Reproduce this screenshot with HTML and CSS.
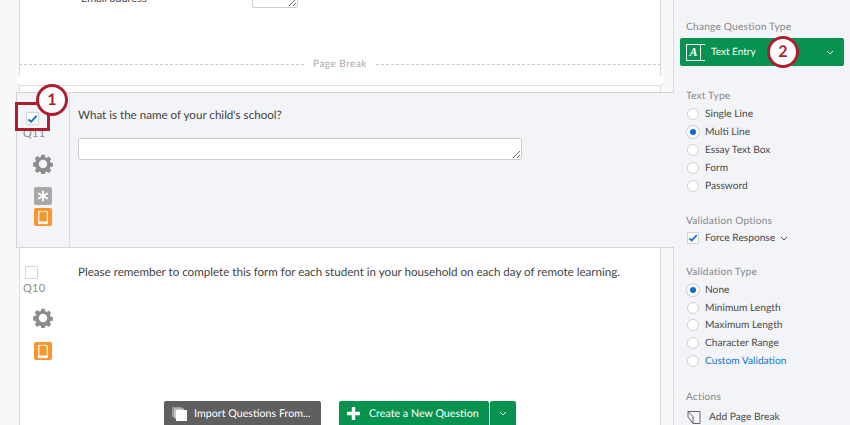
FILE: index.html
```html
<!DOCTYPE html>
<html lang="en">
<head>
    <meta charset="UTF-8">
    <title>Change Question Type</title>
    <link rel="stylesheet" href="styles.css">
</head>
<body>

<div class="page">
    <div class="canvas">
        <div class="block-top">
            <div class="email-row">
                <span class="email-label">Email address</span>
                <textarea class="small-box"></textarea>
            </div>
            <div class="page-break">
                <span class="break-line"></span>
                <span class="break-text">Page Break</span>
                <span class="break-line"></span>
            </div>
            <div class="tear"></div>
        </div>

        <div class="question selected">
            <div class="q-side">
                <span class="check checked">
                    <svg width="12" height="10" viewBox="0 0 12 10"><path d="M1.500 5.500 L4.500 8 L10.500 1.500" fill="none" stroke="#0b6ed0" stroke-width="2"/></svg>
                </span>
                <span class="q-id">Q11</span>
                <svg class="gear" width="20" height="20" viewBox="0 0 20 20"><use href="#gear-icon"/></svg>
                <span class="tag tag-grey">
                    <svg width="12" height="12" viewBox="0 0 12 12"><path d="M6 0.500v11M1.200 3.200l9.600 5.600M10.800 3.200l-9.600 5.600" stroke="#fff" stroke-width="1.800"/></svg>
                </span>
                <span class="tag tag-orange">
                    <svg width="10" height="15" viewBox="0 0 10 14"><use href="#tablet-icon"/></svg>
                </span>
            </div>
            <div class="q-body">
                <p class="q-text">What is the name of your child's school?</p>
                <textarea class="text-box"></textarea>
            </div>
        </div>

        <div class="question plain">
            <div class="q-side">
                <span class="check"></span>
                <span class="q-id">Q10</span>
                <svg class="gear" width="20" height="20" viewBox="0 0 20 20"><use href="#gear-icon"/></svg>
                <span class="tag tag-orange tag-gap">
                    <svg width="10" height="15" viewBox="0 0 10 14"><use href="#tablet-icon"/></svg>
                </span>
            </div>
            <div class="q-body">
                <p class="q-text">Please remember to complete this form for each student in your household on each day of remote learning.</p>
            </div>
            <div class="actions">
                <button class="btn btn-dark">
                    <svg width="16" height="14" viewBox="0 0 16 14"><rect x="0" y="0" width="10" height="10" fill="#9a9a9a"/><rect x="2" y="1.500" width="10" height="10" fill="#c4c4c4"/><rect x="4" y="3" width="11" height="11" fill="#fff"/></svg>
                    Import Questions From...
                </button>
                <div class="split">
                    <button class="btn btn-green btn-main">
                        <svg width="13" height="13" viewBox="0 0 13 13"><path d="M6.500 0v13M0 6.500h13" stroke="#fff" stroke-width="3.400"/></svg>
                        Create a New Question
                    </button>
                    <button class="btn btn-green btn-caret">
                        <svg width="8" height="5" viewBox="0 0 8 5"><path d="M1 1l3 3 3-3" fill="none" stroke="#fff"/></svg>
                    </button>
                </div>
            </div>
        </div>
    </div>

    <aside class="panel">
        <h4 class="panel-title first">Change Question Type</h4>
        <div class="type-select">
            <span class="type-icon"><span class="type-letter">A</span></span>
            <span class="type-name">Text Entry</span>
            <svg width="8" height="5" viewBox="0 0 8 5"><path d="M1 1l3 3 3-3" fill="none" stroke="#fff"/></svg>
        </div>

        <h4 class="panel-title gap-type">Text Type</h4>
        <ul class="options">
            <li><span class="radio"></span>Single Line</li>
            <li><span class="radio on"></span>Multi Line</li>
            <li><span class="radio"></span>Essay Text Box</li>
            <li><span class="radio"></span>Form</li>
            <li><span class="radio"></span>Password</li>
        </ul>

        <h4 class="panel-title gap-section">Validation Options</h4>
        <div class="force">
            <span class="check checked">
                <svg width="12" height="10" viewBox="0 0 12 10"><path d="M1.500 5.500 L4.500 8 L10.500 1.500" fill="none" stroke="#0b6ed0" stroke-width="2"/></svg>
            </span>
            Force Response
            <svg class="force-caret" width="8" height="5" viewBox="0 0 8 5"><path d="M1 1l3 3 3-3" fill="none" stroke="#555"/></svg>
        </div>

        <h4 class="panel-title gap-valid">Validation Type</h4>
        <ul class="options tight">
            <li><span class="radio on"></span>None</li>
            <li><span class="radio"></span>Minimum Length</li>
            <li><span class="radio"></span>Maximum Length</li>
            <li><span class="radio"></span>Character Range</li>
            <li class="link"><span class="radio"></span>Custom Validation</li>
        </ul>

        <h4 class="panel-title gap-actions">Actions</h4>
        <div class="action-row">
            <svg width="14" height="14" viewBox="0 0 14 14"><path d="M1 1.500h12v12H6L1 7z" fill="none" stroke="#666"/><path d="M1 1.500l5 5v7" fill="none" stroke="#666"/></svg>
            Add Page Break
        </div>
    </aside>

    <div class="mark-box"></div>
    <span class="marker marker-one">1</span>
    <span class="marker marker-two">2</span>
</div>

<svg class="defs" width="0" height="0">
    <symbol id="gear-icon" viewBox="0 0 20 20">
        <path fill="#8c8c8c" fill-rule="evenodd" d="M8.300 0.800h3.400l.5 2.500 1.500.6 2.100-1.400 2.400 2.400-1.400 2.100.6 1.500 2.500.5v3.400l-2.500.5-.6 1.500 1.400 2.100-2.400 2.400-2.100-1.400-1.500.6-.5 2.500H8.300l-.5-2.500-1.500-.6-2.100 1.400-2.400-2.400 1.400-2.100-.6-1.500-2.500-.5V8.600l2.500-.5.6-1.500-1.400-2.100 2.400-2.400 2.100 1.400 1.500-.6zM10 5.800a4.200 4.200 0 1 0 0 8.400a4.200 4.200 0 0 0 0-8.400z"/>
    </symbol>
    <symbol id="tablet-icon" viewBox="0 0 10 14">
        <rect x="0.750" y="0.750" width="8.500" height="12.500" rx="1" fill="none" stroke="#fff" stroke-width="1.200"/>
        <rect x="0.750" y="11" width="8.500" height="2.200" fill="#fff"/>
    </symbol>
</svg>

</body>
</html>
```

FILE: styles.css
```css
* {
    box-sizing: border-box;
    font-family: Lato, "Open Sans", sans-serif;
    text-rendering: geometricPrecision;
}

body {
    margin: 0;
    background-color: #f9f9f9;
}

.page {
    position: relative;
    display: flex;
    width: 850px;
    height: 425px;
    overflow: hidden;
    color: #4a4a4a;
}

.defs {
    position: absolute;
}

/* left: survey canvas */
.canvas {
    width: 674px;
    padding-left: 19px;
    background-color: #f8f8f8;
    border-right: 1px solid #ddd;
}

.block-top {
    position: relative;
    height: 92px;
    margin-right: 12px;
    background-color: #fff;
    border-left: 1px solid #ddd;
    border-right: 1px solid #ddd;
}

.email-row {
    display: flex;
    height: 8px;
    margin-left: 61px;
    font-size: 11px;
}

.email-label {
    width: 171px;
    margin-top: -8px;
    line-height: 14px;
}

.small-box {
    display: block;
    width: 46px;
    height: 30px;
    margin: -22px 0 0;
    background-color: #fff;
    border: 1px solid #ccc;
    border-radius: 2px;
}

.page-break {
    display: flex;
    align-items: center;
    gap: 9px;
    margin-top: 49px;
    margin-left: -1px;
    margin-right: -1px;
    height: 14px;
    font-size: 10px;
    letter-spacing: 0.5px;
    color: #a9a9a9;
}

.break-line {
    flex: 1;
    border-top: 1px dashed #c9c9c9;
}

.tear {
    position: absolute;
    left: -3px;
    right: -4px;
    top: 76px;
    height: 10px;
    background-color: #fff;
    border-bottom: 1px solid #e0e0e0;
    border-radius: 0 0 4px 4px;
}

.question {
    position: relative;
    display: flex;
}

.selected {
    height: 156px;
    margin-left: -3px;
    margin-right: -1px;
    background-color: #f3f4f8;
    border: 1px solid #d4d4d4;
    border-right: none;
}

.plain {
    height: 177px;
    margin-right: 12px;
    background-color: #fff;
    border-left: 1px solid #ddd;
    border-right: 1px solid #ddd;
}

.q-side {
    display: flex;
    flex-direction: column;
    align-items: center;
    flex-shrink: 0;
    width: 53px;
    padding: 19px 1px 0 0;
}

.selected .q-side {
    border-right: 1px solid #dcdcdc;
}

.plain .q-side {
    width: 47px;
    padding: 18px 0 0;
    margin-left: -1px;
}

.check {
    display: flex;
    align-items: center;
    justify-content: center;
    width: 13px;
    height: 13px;
    background-color: #fff;
    border: 1px solid #d4d4d4;
    border-radius: 1px;
}

.q-side .check {
    align-self: flex-start;
    margin-left: 9px;
}

.plain .q-side .check {
    margin-left: 6px;
}

.q-id {
    align-self: flex-start;
    margin: 1px 0 0 6px;
    font-size: 11px;
    letter-spacing: 0.3px;
    line-height: 16px;
    color: #8d8d8d;
}

.plain .q-id {
    margin: 2px 0 0 4px;
}

.gear {
    margin-top: 12px;
}

.plain .gear {
    margin-top: 11px;
}

.tag {
    display: flex;
    align-items: center;
    justify-content: center;
    width: 18px;
    height: 18px;
    margin-top: 3px;
    border-radius: 2px;
}

.tag-grey {
    margin-top: 13px;
    background-color: #a8a8a8;
}

.tag-orange {
    background-color: #f9952a;
}

.tag-gap {
    margin-top: 14px;
}

.q-body {
    flex: 1;
    padding-left: 8px;
}

.plain .q-body {
    padding-left: 12px;
}

.q-text {
    margin: 15px 0 0;
    font-size: 11.6px;
    line-height: 16px;
    color: #3f3f3f;
}

.plain .q-text {
    margin-top: 17px;
}

.text-box {
    display: block;
    width: 444px;
    height: 22px;
    margin-top: 14px;
    background-color: #fff;
    border: 1px solid #ccc;
    border-radius: 2px;
}

.actions {
    position: absolute;
    left: 144px;
    bottom: 0;
    display: flex;
    gap: 18px;
}

.btn {
    display: flex;
    align-items: center;
    height: 24px;
    padding: 1px 8px 0;
    border: none;
    border-radius: 2px 2px 0 0;
    color: #fff;
    font-size: 10.7px;
    white-space: nowrap;
}

.btn svg {
    flex-shrink: 0;
}

.btn-dark {
    gap: 6px;
    width: 157px;
    background-color: #5f5f5f;
}

.split {
    display: flex;
    gap: 1px;
}

.btn-green {
    background-color: #07934f;
}

.btn-main {
    gap: 9px;
    width: 150px;
}

.btn-caret {
    width: 26px;
    justify-content: center;
    padding: 0;
}

/* right: settings panel */
.panel {
    flex: 1;
    padding: 0 6px 0 12px;
    background-color: #f3f4f8;
    font-size: 10.2px;
}

.panel-title {
    margin: 0;
    font-size: 10.2px;
    letter-spacing: 0.2px;
    font-weight: 400;
    line-height: 14px;
    color: #85878c;
}

.first {
    margin-top: 20px;
}

.gap-type {
    margin-top: 23px;
}

.gap-section {
    margin-top: 19px;
}

.gap-valid {
    margin-top: 18px;
}

.gap-actions {
    margin-top: 20px;
}

.type-select {
    display: flex;
    align-items: center;
    width: 164px;
    height: 28px;
    margin: 4px 0 0 -6px;
    padding: 0 10px 0 6px;
    background-color: #07934f;
    border-radius: 2px;
    color: #fff;
}

.type-icon {
    width: 19px;
    height: 17px;
    margin-right: 6px;
    border: 1px solid #fff;
    border-right: none;
}

.type-letter {
    display: block;
    width: 14px;
    height: 15px;
    border-right: 1px solid #fff;
    font-family: "Liberation Serif", serif;
    font-style: italic;
    font-weight: 700;
    font-size: 12px;
    line-height: 15px;
    text-align: center;
}

.type-name {
    flex: 1;
    font-size: 10px;
}

.options {
    margin: 2px 0 0;
    padding: 0;
    list-style: none;
}

.options li {
    display: flex;
    align-items: center;
    gap: 6px;
    height: 18px;
    font-size: 10.2px;
}

.tight li {
    height: 17.8px;
}

.radio {
    width: 12px;
    height: 12px;
    margin-left: 1px;
    background-color: #fff;
    border: 1px solid #d0d0d0;
    border-radius: 50%;
}

.radio.on {
    border: 3px solid #fff;
    background-color: #0b6ed0;
    box-shadow: 0 0 0 1px #d0d0d0;
}

.options .link {
    color: #0b78c8;
}

.force {
    display: flex;
    align-items: center;
    gap: 6px;
    height: 18px;
    margin-top: 1px;
    font-size: 10.2px;
}

.force .check {
    width: 12px;
    height: 12px;
    margin-left: 1px;
}

.force-caret {
    margin-left: -1px;
}

.action-row {
    display: flex;
    align-items: center;
    gap: 8px;
    margin: 6px 0 0 1px;
    font-size: 10.2px;
}

/* callouts */
.mark-box {
    position: absolute;
    left: 15px;
    top: 102px;
    width: 35px;
    height: 29px;
    border: 3px solid #ac1e2e;
}

.marker {
    position: absolute;
    width: 32px;
    height: 32px;
    background-color: #fff;
    border: 3px solid #ac1e2e;
    border-radius: 50%;
    color: #ac1e2e;
    font-size: 16px;
    font-weight: 700;
    line-height: 26px;
    text-align: center;
}

.marker-one {
    left: 36px;
    top: 84px;
}

.marker-two {
    left: 767px;
    top: 36px;
}
```
